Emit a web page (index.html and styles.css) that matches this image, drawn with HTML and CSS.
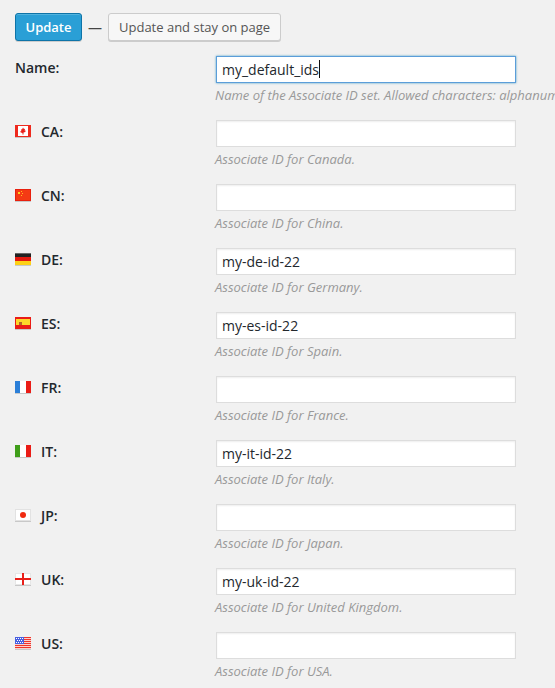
FILE: index.html
```html
<!DOCTYPE html>
<html lang="en">
<head>
    <meta charset="UTF-8">
    <meta name="viewport" content="width=device-width, initial-scale=1.0">
    <title>Edit Associate ID set</title>
    <link rel="stylesheet" href="styles.css">
</head>
<body>
<form class="wrap">
    <div class="actions">
        <button type="button" class="button button-primary">Update</button>
        <span class="dash">—</span>
        <button type="button" class="button">Update and stay on page</button>
    </div>

    <div class="row">
        <label class="row-label" for="name">Name:</label>
        <div class="field">
            <div class="input-wrap">
                <input id="name" class="text-input is-focus" type="text" value="my_default_ids">
                <span class="caret"></span>
            </div>
            <p class="description">Name of the Associate ID set. Allowed characters: alphanumeric, underscores and hyphens.</p>
        </div>
    </div>

    <div class="row">
        <label class="row-label" for="ca">
            <svg class="flag" viewBox="0 0 16 13"><rect width="16" height="13" fill="#c8c8c8"/><rect width="16" height="12" fill="#ee2a1e"/><rect x="3" y="1" width="10" height="10" fill="#fff"/><path d="M8 2.500l1 1.500 1-.3-.3 2 1-.2-.4 1.500-1.800.5V9.500H7.500V8l-1.800-.5-.4-1.500 1 .2-.3-2 1 .3z" fill="#e8201a"/></svg>
            CA:
        </label>
        <div class="field">
            <input id="ca" class="text-input" type="text">
            <p class="description">Associate ID for Canada.</p>
        </div>
    </div>

    <div class="row">
        <label class="row-label" for="cn">
            <svg class="flag" viewBox="0 0 16 13"><rect width="16" height="13" fill="#c8c8c8"/><rect width="16" height="12" fill="#e8200e"/><rect x="1" y="1" width="14" height="10" fill="#f43a14"/><rect x="3" y="3" width="2" height="2" fill="#ffd21e"/><rect x="6" y="2" width="1" height="1" fill="#ffc01e"/><rect x="7" y="4" width="1" height="1" fill="#ffc01e"/><rect x="6" y="6" width="1" height="1" fill="#ffc01e"/></svg>
            CN:
        </label>
        <div class="field">
            <input id="cn" class="text-input" type="text">
            <p class="description">Associate ID for China.</p>
        </div>
    </div>

    <div class="row">
        <label class="row-label" for="de">
            <svg class="flag" viewBox="0 0 16 13"><rect width="16" height="13" fill="#c8c8c8"/><rect width="16" height="1" fill="#666"/><rect y="1" width="16" height="3" fill="#222"/><rect y="4" width="16" height="4" fill="#e2190f"/><rect y="8" width="16" height="4" fill="#fdd116"/></svg>
            DE:
        </label>
        <div class="field">
            <input id="de" class="text-input" type="text" value="my-de-id-22">
            <p class="description">Associate ID for Germany.</p>
        </div>
    </div>

    <div class="row">
        <label class="row-label" for="es">
            <svg class="flag" viewBox="0 0 16 13"><rect width="16" height="13" fill="#c8c8c8"/><rect width="16" height="12" fill="#ea1c16"/><rect x="1" y="2" width="14" height="6" fill="#fdd82a"/><rect x="4" y="5" width="3" height="3" fill="#b5622a"/></svg>
            ES:
        </label>
        <div class="field">
            <input id="es" class="text-input" type="text" value="my-es-id-22">
            <p class="description">Associate ID for Spain.</p>
        </div>
    </div>

    <div class="row">
        <label class="row-label" for="fr">
            <svg class="flag" viewBox="0 0 16 13"><rect width="16" height="13" fill="#c8c8c8"/><rect width="16" height="12" fill="#fff"/><rect width="5" height="12" fill="#2b7fd8"/><rect x="11" width="5" height="12" fill="#ea1c16"/></svg>
            FR:
        </label>
        <div class="field">
            <input id="fr" class="text-input" type="text">
            <p class="description">Associate ID for France.</p>
        </div>
    </div>

    <div class="row">
        <label class="row-label" for="it">
            <svg class="flag" viewBox="0 0 16 13"><rect width="16" height="13" fill="#c8c8c8"/><rect width="16" height="12" fill="#fff"/><rect width="5" height="12" fill="#3f9e1a"/><rect x="11" width="5" height="12" fill="#ea1c16"/></svg>
            IT:
        </label>
        <div class="field">
            <input id="it" class="text-input" type="text" value="my-it-id-22">
            <p class="description">Associate ID for Italy.</p>
        </div>
    </div>

    <div class="row">
        <label class="row-label" for="jp">
            <svg class="flag" viewBox="0 0 16 13"><rect width="16" height="13" fill="#c8c8c8"/><rect width="16" height="12" fill="#e2e2e2"/><rect x="1" y="1" width="14" height="10" fill="#fff"/><circle cx="8" cy="6" r="3" fill="#f02a10"/></svg>
            JP:
        </label>
        <div class="field">
            <input id="jp" class="text-input" type="text">
            <p class="description">Associate ID for Japan.</p>
        </div>
    </div>

    <div class="row">
        <label class="row-label" for="uk">
            <svg class="flag" viewBox="0 0 16 13"><rect width="16" height="13" fill="#c8c8c8"/><rect width="16" height="12" fill="#e6e6e6"/><rect x="1" y="1" width="14" height="10" fill="#fff"/><rect x="7" width="2" height="12" fill="#e8201a"/><rect y="5" width="16" height="2" fill="#e8201a"/></svg>
            UK:
        </label>
        <div class="field">
            <input id="uk" class="text-input" type="text" value="my-uk-id-22">
            <p class="description">Associate ID for United Kingdom.</p>
        </div>
    </div>

    <div class="row">
        <label class="row-label" for="us">
            <svg class="flag" viewBox="0 0 16 13"><rect width="16" height="13" fill="#c8c8c8"/><rect width="16" height="12" fill="#fbd0cc"/><rect width="16" height="1" fill="#f0342a"/><rect y="2" width="16" height="1" fill="#f0342a"/><rect y="4" width="16" height="1" fill="#f0342a"/><rect y="6" width="16" height="1" fill="#f0342a"/><rect y="8" width="16" height="1" fill="#f0342a"/><rect y="10" width="16" height="1" fill="#f0342a"/><rect width="9" height="7" fill="#4a60e0"/><rect x="1" y="1" width="1" height="1" fill="#fff"/><rect x="3" y="1" width="1" height="1" fill="#fff"/><rect x="5" y="1" width="1" height="1" fill="#fff"/><rect x="7" y="1" width="1" height="1" fill="#fff"/><rect x="2" y="3" width="1" height="1" fill="#fff"/><rect x="4" y="3" width="1" height="1" fill="#fff"/><rect x="6" y="3" width="1" height="1" fill="#fff"/><rect x="1" y="5" width="1" height="1" fill="#fff"/><rect x="3" y="5" width="1" height="1" fill="#fff"/><rect x="5" y="5" width="1" height="1" fill="#fff"/><rect x="7" y="5" width="1" height="1" fill="#fff"/></svg>
            US:
        </label>
        <div class="field">
            <input id="us" class="text-input" type="text">
            <p class="description">Associate ID for USA.</p>
        </div>
    </div>
</form>
</body>
</html>
```

FILE: styles.css
```css
html, body {
    margin: 0;
    height: 100%;
    overflow: hidden;
}

body {
    font-family: "Open Sans", sans-serif;
    font-size: 14px;
    color: #23282d;
    background-color: #f1f1f1;
}

.wrap {
    padding: 13px 0 0 15px;
    overflow: hidden;
}

.actions {
    display: flex;
    align-items: center;
    gap: 6px;
    height: 28px;
    margin-bottom: 15px;
}

.dash {
    color: #444;
    font-size: 14px;
}

.button {
    height: 28px;
    padding: 0 10px;
    font-family: inherit;
    font-size: 13px;
    color: #555;
    background: #f7f7f7;
    border: 1px solid #ccc;
    border-radius: 3px;
    box-shadow: 0 1px 0 #ccc;
}

.button-primary {
    width: 67px;
    padding: 0;
    font-weight: 600;
    color: #fff;
    background: #2a9fd6;
    border-color: #0e74a8;
    box-shadow: inset 0 1px 0 rgba(120, 200, 230, .5), 0 1px 0 rgba(0, 0, 0, .15);
}

.row {
    display: grid;
    grid-template-columns: 201px 1fr;
    height: 64px;
}

.row-label {
    display: flex;
    align-items: center;
    gap: 10px;
    height: 23px;
    font-weight: 600;
    color: #23282d;
}

.flag {
    width: 16px;
    height: 13px;
    flex: none;
}

.input-wrap {
    position: relative;
    width: 300px;
}

.text-input {
    display: block;
    box-sizing: border-box;
    width: 300px;
    height: 27px;
    margin: 0;
    padding: 0 5px;
    font-family: inherit;
    font-size: 14px;
    color: #23282d;
    background: #fff;
    border: 1px solid #ddd;
    box-shadow: inset 0 1px 2px rgba(0, 0, 0, .07);
    outline: none;
}

.text-input.is-focus {
    border-color: #5b9dd9;
    box-shadow: 0 0 2px rgba(30, 140, 190, .8);
}

.caret {
    position: absolute;
    top: 4px;
    left: 103px;
    width: 1px;
    height: 18px;
    background: #111;
}

.description {
    margin: 3px 0 0 -1px;
    font-size: 13px;
    font-style: italic;
    line-height: 18px;
    color: #999;
    white-space: nowrap;
}
```
